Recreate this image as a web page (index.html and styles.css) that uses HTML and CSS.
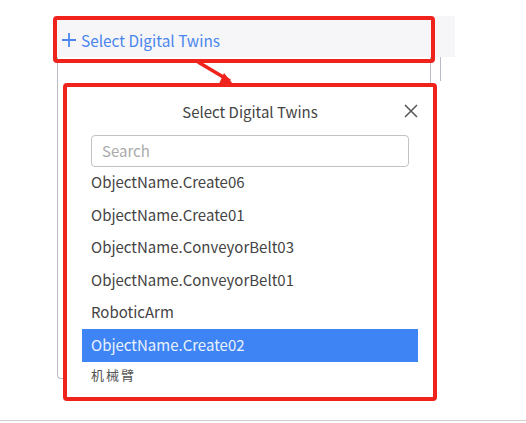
FILE: index.html
```html
<!DOCTYPE html>
<html>
<head>
<meta charset="utf-8">
<link rel="stylesheet" href="styles.css">
</head>
<body>
<div class="page">
  <div class="toolbar">
    <button class="add-btn">
      <svg class="plus" width="14" height="14" viewBox="0 0 14 14"><path d="M7 0V14M0 7H14" stroke="#4a86ee" stroke-width="1.8" fill="none"/></svg>
      <span>Select Digital Twins</span>
    </button>
  </div>
  <div class="content-row">
    <div class="listbox"></div>
    <div class="tick"></div>
  </div>

  <svg class="arrow" width="50" height="32" viewBox="0 0 50 32">
    <path d="M2 2L34 21" stroke="#f0221c" stroke-width="3.5" fill="none"/>
    <path d="M28 13L41 29L22 26Z" fill="#f0221c"/>
  </svg>

  <div class="popup">
    <div class="popup-head">
      <span class="popup-title">Select Digital Twins</span>
      <svg class="close" width="14" height="14" viewBox="0 0 14 14"><path d="M1 1L13 13M13 1L1 13" stroke="#555" stroke-width="1.5" fill="none"/></svg>
    </div>
    <div class="search">Search</div>
    <ul class="items">
      <li>ObjectName.Create06</li>
      <li>ObjectName.Create01</li>
      <li>ObjectName.ConveyorBelt03</li>
      <li>ObjectName.ConveyorBelt01</li>
      <li>RoboticArm</li>
      <li class="active">ObjectName.Create02</li>
      <li class="small">机械臂</li>
    </ul>
  </div>
</div>
</body>
</html>
```

FILE: styles.css
```css
* { box-sizing: border-box; }
html, body { margin: 0; padding: 0; background: #fff; }
body { font-family: "Noto Sans CJK SC", "Noto Sans", sans-serif; }
.page {
  position: relative;
  width: 526px;
  height: 421px;
  border-bottom: 1px solid #cfcfcf;
  padding-top: 15px;
  overflow: hidden;
}
.toolbar {
  margin-left: 53px;
  width: 402px;
  height: 41px;
  background: #f6f6f8;
}
.add-btn {
  display: flex;
  align-items: center;
  width: 382px;
  height: 47px;
  margin: 1px 0 0 0;
  padding: 0 0 0 5px;
  border: 4px solid #f0221c;
  border-radius: 4px;
  background: transparent;
  font-family: inherit;
  font-size: 15.4px;
  color: #4a86ee;
  position: relative;
  z-index: 2;
}
.plus { margin-right: 5px; }
.content-row {
  display: flex;
  margin-left: 57px;
}
.listbox {
  width: 374px;
  height: 322px;
  border: 1px solid #b8bcc4;
  border-top: none;
  border-radius: 0 0 4px 4px;
}
.tick {
  width: 1px;
  height: 24px;
  margin-left: 9px;
  background: #b8bcc4;
}
.arrow {
  position: absolute;
  left: 196px;
  top: 60px;
}
.popup {
  position: absolute;
  left: 63px;
  top: 83px;
  width: 374px;
  height: 318px;
  border: 4px solid #f0221c;
  border-radius: 4px;
  background: #fff;
  overflow: hidden;
}
.popup-head {
  position: relative;
  height: 48px;
  display: flex;
  align-items: center;
  justify-content: center;
}
.popup-title {
  font-size: 15px;
  color: #444;
}
.close {
  position: absolute;
  right: 15px;
  top: 17px;
}
.search {
  margin-left: 24px;
  width: 318px;
  height: 32px;
  border: 1px solid #c2c2c2;
  border-radius: 4px;
  padding-left: 10px;
  font-size: 15px;
  line-height: 30px;
  color: #aaa;
}
.items {
  list-style: none;
  margin: -1px 0 0 15px;
  padding: 0;
  width: 336px;
}
.items li {
  height: 32.6px;
  line-height: 32px;
  padding-left: 9px;
  font-size: 15px;
  color: #444;
  white-space: nowrap;
}
.items li.active {
  background: #3f84f4;
  color: #eaf2ff;
}
.items li.small {
  font-size: 13px;
  letter-spacing: 2px;
  line-height: 26px;
  color: #555;
}
```
